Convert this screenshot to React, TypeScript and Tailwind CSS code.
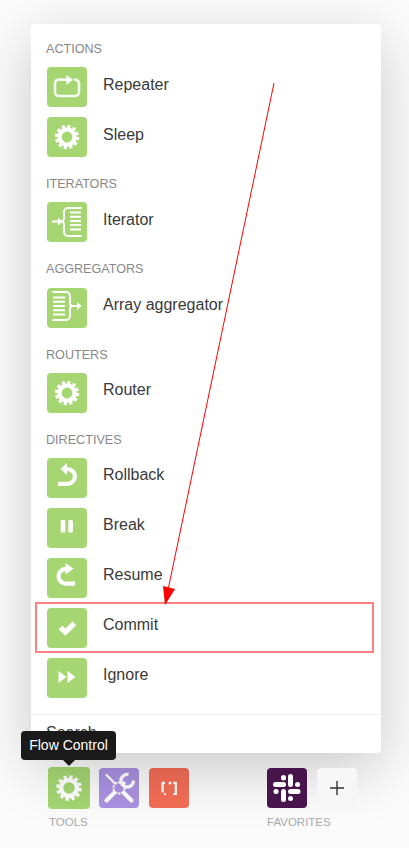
import React from "react";

const W = { fill: "none", stroke: "#fff", strokeLinecap: "round" as const, strokeLinejoin: "round" as const };

function Gear() {
  return (
    <svg viewBox="0 0 40 40" className="w-full h-full">
      <circle cx="20" cy="20" r="7.6" fill="none" stroke="#fff" strokeWidth="4.4" />
      <circle cx="20" cy="20" r="10.6" fill="none" stroke="#fff" strokeWidth="3.2" strokeDasharray="3.1 2.45" />
    </svg>
  );
}
function Repeat() {
  return (
    <svg viewBox="0 0 40 40" className="w-full h-full">
      <path d="M20 12.6 H12 a4 4 0 0 0 -4 4 v8.4 a4 4 0 0 0 4 4 H28 a4 4 0 0 0 4 -4 V16.6 a4 4 0 0 0 -4 -4 H28" {...W} strokeWidth="2.6" opacity="0.9" />
      <path d="M19.5 8 L26 12.8 L19.5 18 Z" fill="#fff" />
    </svg>
  );
}
function Iter() {
  return (
    <svg viewBox="0 0 40 40" className="w-full h-full">
      <path d="M34 6 H21 a4 4 0 0 0 -4 4 v6 a3 3 0 0 1 -3 3.5 a3 3 0 0 1 3 3.5 v7 a4 4 0 0 0 4 4 H34" {...W} strokeWidth="2" />
      <path d="M23 10.5 H34 M23 14.8 H34 M23 19 H34 M23 23 H34 M23 27.5 H34" fill="none" stroke="#fff" strokeWidth="2" />
      <path d="M5 19.5 H12" fill="none" stroke="#fff" strokeWidth="1.8" />
      <path d="M11 15.5 L15.5 19.5 L11 23.5 Z" fill="#fff" />
    </svg>
  );
}
function Agg() {
  return (
    <svg viewBox="0 0 40 40" className="w-full h-full">
      <path d="M6 4 H19 a4 4 0 0 1 4 4 v6 a3 3 0 0 0 3 4 a3 3 0 0 0 -3 4 v6 a4 4 0 0 1 -4 4 H6" {...W} strokeWidth="2" />
      <path d="M6 9.5 H18 M6 13.8 H18 M6 18 H18 M6 22.2 H18 M6 26.5 H18" fill="none" stroke="#fff" strokeWidth="2" />
      <path d="M26 18 H31" fill="none" stroke="#fff" strokeWidth="1.8" />
      <path d="M30 14 L34.5 18 L30 22 Z" fill="#fff" />
    </svg>
  );
}
function Rollback() {
  return (
    <svg viewBox="0 0 40 40" className="w-full h-full">
      <path d="M18 11 H20.5 A7.4 7.4 0 0 1 20.5 25.8 H13" fill="none" stroke="#fff" strokeWidth="4.2" strokeLinecap="square" />
      <path d="M20 5 L13.5 11 L20 17 Z" fill="#fff" />
    </svg>
  );
}
function Pause() {
  return (
    <svg viewBox="0 0 40 40" className="w-full h-full">
      <rect x="13.7" y="12" width="4.6" height="12.6" rx="1" fill="#fff" />
      <rect x="21.3" y="12" width="4.6" height="12.6" rx="1" fill="#fff" />
    </svg>
  );
}
function Resume() {
  return (
    <svg viewBox="0 0 40 40" className="w-full h-full">
      <path d="M20 10.8 H19 A7.4 7.4 0 0 0 19 25.6 H26" fill="none" stroke="#fff" strokeWidth="4.2" strokeLinecap="square" />
      <path d="M18.5 5 L26.5 10.8 L18.5 16.6 Z" fill="#fff" />
    </svg>
  );
}
function Check() {
  return (
    <svg viewBox="0 0 40 40" className="w-full h-full">
      <path d="M13.5 19.5 L18.3 24.2 L27.5 15.5" fill="none" stroke="#fff" strokeWidth="5.2" />
    </svg>
  );
}
function Forward() {
  return (
    <svg viewBox="0 0 40 40" className="w-full h-full">
      <path d="M11.5 13 L19.5 19 L11.5 25 Z M20.5 13 L28.5 19 L20.5 25 Z" fill="#fff" />
    </svg>
  );
}
function Tools() {
  return (
    <svg viewBox="0 0 40 40" className="w-full h-full">
      <circle cx="20" cy="20" r="5.6" fill="none" stroke="#fff" strokeWidth="2" strokeDasharray="2.6 0.9" />
      <path d="M7.5 7 L15.5 15" fill="none" stroke="#fff" strokeWidth="2.4" strokeLinecap="round" />
      <path d="M25 25 L32.5 32.5 M15 25 L7.5 32.5" fill="none" stroke="#fff" strokeWidth="4.2" strokeLinecap="round" />
      <path d="M24 16 L26 14" fill="none" stroke="#fff" strokeWidth="3.4" />
      <path d="M29.5 6.5 A6.3 6.3 0 1 0 34.5 12.5" fill="none" stroke="#fff" strokeWidth="3.4" />
    </svg>
  );
}
function Bracket() {
  return (
    <svg viewBox="0 0 40 40" className="w-full h-full">
      <path d="M16 14.8 H13.6 V24.5" fill="none" stroke="#fff" strokeWidth="2.2" />
      <path d="M24.2 14.8 H26.8 V26 H24.2" fill="none" stroke="#fff" strokeWidth="2.2" />
      <circle cx="21" cy="15" r="1.5" fill="#fff" />
      <circle cx="16" cy="26" r="1.1" fill="#fff" />
    </svg>
  );
}
function Slack() {
  return (
    <svg viewBox="0 0 40 40" className="w-full h-full">
      <g fill="none" stroke="#fff" strokeWidth="5" strokeLinecap="round">
        <path d="M23.5 8.5 V16.5" />
        <path d="M8.5 16.5 H16.5" />
        <path d="M16.5 9.5 V10" />
        <path d="M30.5 16.5 H30.6" />
        <path d="M23.5 23.5 H31" />
        <path d="M16.5 23.5 V31.5" />
        <path d="M9 23.5 H9.1" />
        <path d="M23.5 30.5 V30.6" />
      </g>
    </svg>
  );
}

function Row({ label, Icon, textPad }: { label: string; Icon: () => React.ReactElement; textPad: string }) {
  return (
    <div className="flex h-[50px] items-center gap-[16px] pl-[16px]">
      <div className="h-[40px] w-[40px] shrink-0 rounded-[4px] bg-[#a5d672]">
        <Icon />
      </div>
      <span className={`text-[16px] leading-[24px] text-[#3a3a3a] ${textPad}`}>{label}</span>
    </div>
  );
}

function Header({ text, h }: { text: string; h: string }) {
  return (
    <div className={`flex items-end pl-[15px] text-[12.6px] leading-[15px] text-[#888] ${h}`}>{text}</div>
  );
}

const up2 = "pb-[4px]";
const up4 = "pb-[6px]";

export default function App() {
  return (
    <div className="relative h-[848px] w-[409px] overflow-hidden bg-[#fbfbfb] pl-[31px] pt-[24px] [font-family:'Liberation_Sans',Arial,sans-serif]">
      <div className="relative z-10 h-[729px] w-[350px] overflow-hidden rounded-[4px] bg-white shadow-[0_16px_60px_rgba(0,0,0,0.2)]">
        <Header text="ACTIONS" h="h-[38px] pb-[5px]" />
        <Row label="Repeater" Icon={Repeat} textPad={up2} />
        <Row label="Sleep" Icon={Gear} textPad={up2} />
        <Header text="ITERATORS" h="h-[35px] pb-[5px]" />
        <Row label="Iterator" Icon={Iter} textPad={up2} />
        <Header text="AGGREGATORS" h="h-[36px] pb-[6px]" />
        <Row label="Array aggregator" Icon={Agg} textPad={up4} />
        <Header text="ROUTERS" h="h-[35px] pb-[5px]" />
        <Row label="Router" Icon={Gear} textPad={up4} />
        <Header text="DIRECTIVES" h="h-[35px] pb-[5px]" />
        <Row label="Rollback" Icon={Rollback} textPad={up4} />
        <Row label="Break" Icon={Pause} textPad={up4} />
        <Row label="Resume" Icon={Resume} textPad={up4} />
        <Row label="Commit" Icon={Check} textPad={up4} />
        <Row label="Ignore" Icon={Forward} textPad={up4} />
        <div className="mt-[11px] border-t border-[#f0f0f0] pl-[15px] pt-[6px] text-[16px] leading-[24px] text-[#3a3a3a]">Search</div>
      </div>

      <div className="flex">
        <div className="ml-[17px] flex w-[210px] flex-col">
          <div className="mt-[14px] flex h-[42px] items-center gap-[9px]">
            <div className="h-[42px] w-[42px] rounded-[4px] bg-[#a5d672]">
              <Gear />
            </div>
            <div className="h-[40px] w-[40px] rounded-[4px] bg-[#ab92e2]">
              <Tools />
            </div>
            <div className="ml-[1px] h-[40px] w-[40px] rounded-[4px] bg-[#f56e57]">
              <Bracket />
            </div>
          </div>
          <div className="ml-[1px] mt-[6px] text-[11.5px] leading-[14px] text-[#aaa]">TOOLS</div>
        </div>
        <div className="relative z-20 ml-[9px] flex flex-col">
          <div className="mt-[14px] flex h-[42px] items-center gap-[10px]">
            <div className="h-[40px] w-[40px] rounded-[4px] bg-[#47154c]">
              <Slack />
            </div>
            <div className="flex h-[40px] w-[40px] items-center justify-center rounded-[4px] bg-[#f6f6f6]">
              <svg viewBox="0 0 14 14" className="h-[14px] w-[14px]">
                <path d="M7 0 V14 M0 7 H14" stroke="#333" strokeWidth="1.4" fill="none" />
              </svg>
            </div>
          </div>
          <div className="mt-[6px] text-[11.5px] leading-[14px] text-[#aaa]">FAVORITES</div>
        </div>
      </div>

      <div className="absolute left-[21px] top-[731px] z-30 flex h-[29px] w-[95px] items-center justify-center rounded-[4px] bg-[#1a1a1a] text-[14px] text-white">
        Flow Control
        <div className="absolute left-[42px] top-[29px] h-0 w-0 border-x-[6px] border-t-[6px] border-x-transparent border-t-[#1a1a1a]" />
      </div>

      <div className="absolute left-[35px] top-[602px] z-20 h-[51px] w-[339px] border-2 border-[#ff8080]" />

      <svg className="pointer-events-none absolute left-0 top-0 z-20 h-[848px] w-[409px]" viewBox="0 0 409 848">
        <line x1="274" y1="83" x2="168" y2="590" stroke="#ff0000" strokeWidth="1" />
        <path d="M163 586 L175 589 L165 605 Z" fill="#ff0000" />
      </svg>
    </div>
  );
}
